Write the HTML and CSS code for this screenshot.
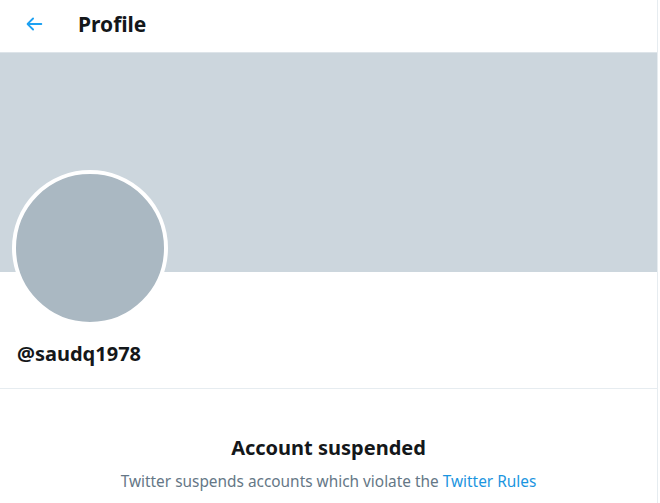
FILE: index.html
```html
<!DOCTYPE html>
<html>
<head>
<meta charset="utf-8">
<link rel="stylesheet" href="styles.css">
</head>
<body>
<div class="page">
  <header class="topbar">
    <span class="back">
      <svg viewBox="0 0 24 24" width="22" height="22"><path d="M20 11H7.414l4.293-4.293a1 1 0 0 0-1.414-1.414l-6 6a1 1 0 0 0 0 1.414l6 6a1 1 0 0 0 1.414-1.414L7.414 13H20a1 1 0 1 0 0-2z" fill="#1da1f2"/></svg>
    </span>
    <h1 class="title">Profile</h1>
  </header>
  <div class="banner"></div>
  <div class="profile">
    <div class="avatar"></div>
    <div class="handle">@saudq1978</div>
  </div>
  <div class="suspended">
    <h2 class="s-title">Account suspended</h2>
    <p class="s-text">Twitter suspends accounts which violate the <a class="link">Twitter Rules</a></p>
  </div>
</div>
</body>
</html>
```
FILE: styles.css
```css
* { box-sizing: border-box; }
html, body { margin: 0; padding: 0; background: #fff; }
body { font-family: "Noto Sans", "Open Sans", sans-serif; color: #14171a; }
.page { width: 658px; height: 503px; border-right: 1px solid #e6ecf0; overflow: hidden; }
.topbar { height: 52px; display: flex; align-items: center; padding: 0 0 4px 23px; }
.back { width: 22px; height: 22px; display: flex; margin-right: 33px; }
.title { margin: 0; font-size: 21px; font-weight: 700; line-height: 24px; }
.banner { height: 220px; background: #ccd6dd; border-top: 1px solid #dde4e9; }
.profile { display: flex; flex-direction: column; padding: 0 17px; border-bottom: 1px solid #e6ecf0; height: 117px; }
.avatar { width: 156px; height: 156px; flex: none; border-radius: 50%; background: #aab8c2; border: 4px solid #fff; margin: -102px 0 0 -5px; }
.handle { font-size: 20px; font-weight: 700; margin-top: 15px; line-height: 26px; }
.suspended { text-align: center; padding-top: 45px; }
.s-title { margin: 0; font-size: 20px; font-weight: 700; line-height: 28px; }
.s-text { margin: 10px 0 0; font-size: 15.4px; color: #657786; line-height: 20px; }
.link { color: #1b95e0; }
```
